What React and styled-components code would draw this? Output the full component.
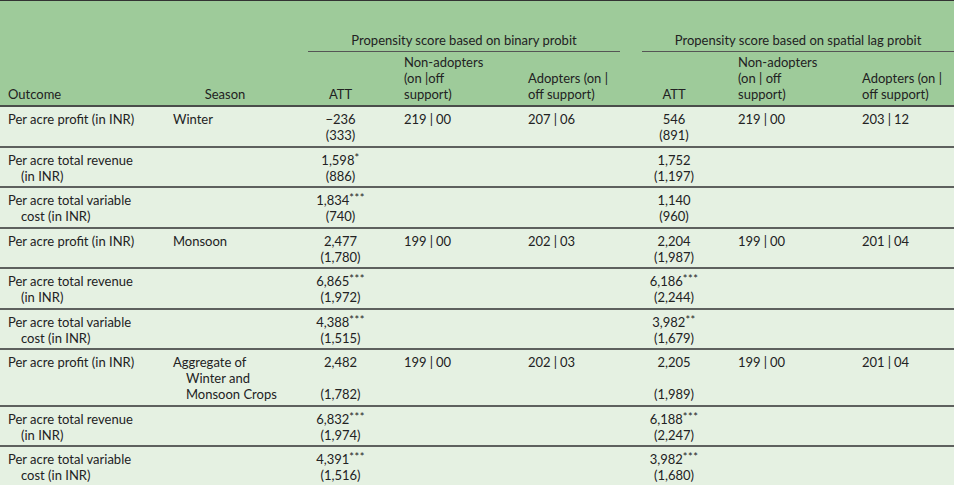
import React from 'react';
import styled, { createGlobalStyle } from 'styled-components';

const GlobalStyle = createGlobalStyle`
  html, body {
    margin: 0;
    padding: 0;
    background: #e5f1e2;
  }
  body {
    font-family: 'Lato', 'Noto Sans', sans-serif;
    color: #222;
  }
`;

const Table = styled.table`
  width: 954px;
  table-layout: fixed;
  border-collapse: collapse;
  font-size: 13px;
  line-height: 16px;
  border-top: 1px solid #333;
`;

const Head = styled.thead`
  background: #9ecb9a;
`;

const Body = styled.tbody`
  background: #e5f1e2;
`;

const GroupCell = styled.th`
  font-weight: 400;
  padding: 31px 0 0 0;
  text-align: center;
`;

const GroupLabel = styled.div`
  margin-left: ${({ $inset }) => $inset}px;
  margin-right: ${({ $right }) => $right || 0}px;
  padding-bottom: 3px;
  border-bottom: 1px solid #555;
  white-space: nowrap;
`;

const ColHead = styled.th`
  font-weight: 400;
  vertical-align: bottom;
  padding: 2px 8px 3px;
  text-align: ${({ $align }) => $align || 'left'};
  white-space: nowrap;
  border-bottom: 2px solid #4a4d4a;
`;

const Row = styled.tr`
  border-bottom: 2px solid #5e615e;
`;

const Cell = styled.td`
  vertical-align: top;
  padding: 4px 8px 2.5px;
  text-align: ${({ $align }) => $align || 'left'};
  white-space: nowrap;
`;

const Line = styled.div`
  padding-left: ${({ $indent }) => ($indent ? 13 : 0)}px;
  height: 16px;
`;

const Stars = styled.sup`
  font-size: 11px;
  line-height: 0;
  vertical-align: 3px;
  letter-spacing: 0.5px;
`;

const Bar = styled.span`
  padding: 0 3px;
`;

const widths = [165, 120, 111, 124, 98, 112, 124, 100];

const rows = [
  {
    outcome: ['Per acre profit (in INR)'],
    season: ['Winter'],
    b: { est: '\u2212236', se: '(333)' },
    bn: ['219', '00'],
    ba: ['207', '06'],
    s: { est: '546', se: '(891)' },
    sn: ['219', '00'],
    sa: ['203', '12'],
  },
  {
    outcome: ['Per acre total revenue', '(in INR)'],
    b: { est: '1,598', stars: '*', se: '(886)' },
    s: { est: '1,752', se: '(1,197)' },
  },
  {
    outcome: ['Per acre total variable', 'cost (in INR)'],
    b: { est: '1,834', stars: '***', se: '(740)' },
    s: { est: '1,140', se: '(960)' },
  },
  {
    outcome: ['Per acre profit (in INR)'],
    season: ['Monsoon'],
    b: { est: '2,477', se: '(1,780)' },
    bn: ['199', '00'],
    ba: ['202', '03'],
    s: { est: '2,204', se: '(1,987)' },
    sn: ['199', '00'],
    sa: ['201', '04'],
  },
  {
    outcome: ['Per acre total revenue', '(in INR)'],
    b: { est: '6,865', stars: '***', se: '(1,972)' },
    s: { est: '6,186', stars: '***', se: '(2,244)' },
  },
  {
    outcome: ['Per acre total variable', 'cost (in INR)'],
    b: { est: '4,388', stars: '***', se: '(1,515)' },
    s: { est: '3,982', stars: '**', se: '(1,679)' },
  },
  {
    outcome: ['Per acre profit (in INR)'],
    season: ['Aggregate of', 'Winter and', 'Monsoon Crops'],
    b: { est: '2,482', se: '(1,782)', gap: true },
    bn: ['199', '00'],
    ba: ['202', '03'],
    s: { est: '2,205', se: '(1,989)', gap: true },
    sn: ['199', '00'],
    sa: ['201', '04'],
  },
  {
    outcome: ['Per acre total revenue', '(in INR)'],
    b: { est: '6,832', stars: '***', se: '(1,974)' },
    s: { est: '6,188', stars: '***', se: '(2,247)' },
  },
  {
    outcome: ['Per acre total variable', 'cost (in INR)'],
    b: { est: '4,391', stars: '***', se: '(1,516)' },
    s: { est: '3,982', stars: '***', se: '(1,680)' },
  },
];

function Lines({ items = [] }) {
  return items.map((text, i) => (
    <Line key={i} $indent={i > 0}>
      {text}
    </Line>
  ));
}

function Att({ value }) {
  return (
    <Cell $align="center">
      <Line>
        {value.est}
        {value.stars && <Stars>{value.stars}</Stars>}
      </Line>
      {value.gap && <Line />}
      <Line>{value.se}</Line>
    </Cell>
  );
}

function Support({ pair }) {
  return (
    <Cell>
      {pair && (
        <Line>
          {pair[0]}
          <Bar>|</Bar>
          {pair[1]}
        </Line>
      )}
    </Cell>
  );
}

export default function App() {
  return (
    <>
      <GlobalStyle />
      <Table>
        <colgroup>
          {widths.map((w, i) => (
            <col key={i} style={{ width: w }} />
          ))}
        </colgroup>
        <Head>
          <tr>
            <GroupCell colSpan={2} />
            <GroupCell colSpan={3}>
              <GroupLabel $inset={23} $right={-2}>
                Propensity score based on binary probit
              </GroupLabel>
            </GroupCell>
            <GroupCell colSpan={3}>
              <GroupLabel $inset={24}>Propensity score based on spatial lag probit</GroupLabel>
            </GroupCell>
          </tr>
          <tr>
            <ColHead>Outcome</ColHead>
            <ColHead $align="center">Season</ColHead>
            <ColHead $align="center">ATT</ColHead>
            <ColHead>
              <Line>Non-adopters</Line>
              <Line>(on |off</Line>
              <Line>support)</Line>
            </ColHead>
            <ColHead>
              <Line>Adopters (on |</Line>
              <Line>off support)</Line>
            </ColHead>
            <ColHead $align="center">ATT</ColHead>
            <ColHead>
              <Line>Non-adopters</Line>
              <Line>(on | off</Line>
              <Line>support)</Line>
            </ColHead>
            <ColHead>
              <Line>Adopters (on |</Line>
              <Line>off support)</Line>
            </ColHead>
          </tr>
        </Head>
        <Body>
          {rows.map((r, i) => (
            <Row key={i}>
              <Cell>
                <Lines items={r.outcome} />
              </Cell>
              <Cell>
                <Lines items={r.season} />
              </Cell>
              <Att value={r.b} />
              <Support pair={r.bn} />
              <Support pair={r.ba} />
              <Att value={r.s} />
              <Support pair={r.sn} />
              <Support pair={r.sa} />
            </Row>
          ))}
        </Body>
      </Table>
    </>
  );
}
